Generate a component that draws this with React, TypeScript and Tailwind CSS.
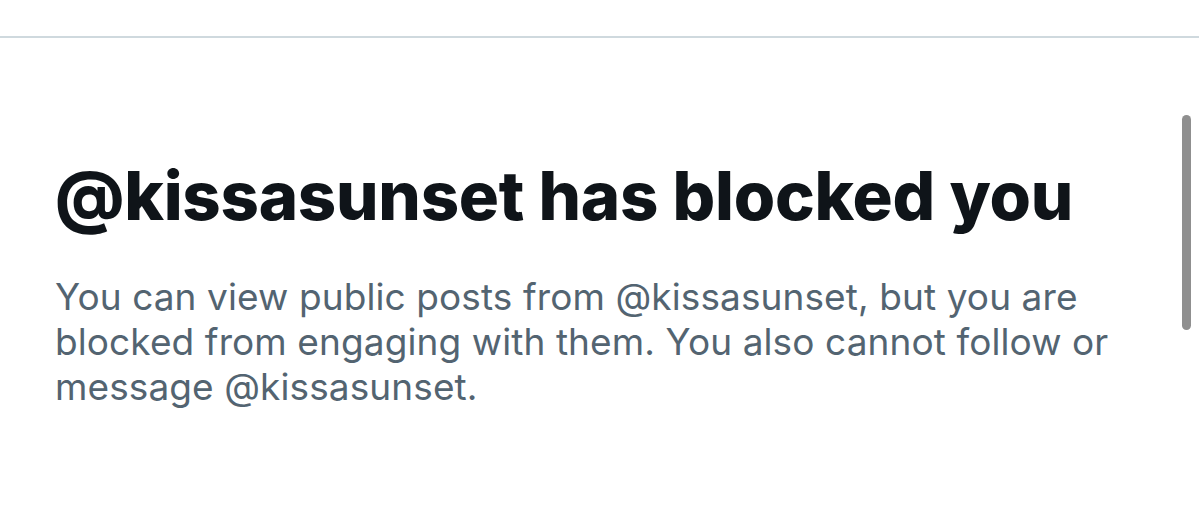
import React from 'react';

export default function App() {
  return (
    <div className="relative h-[508px] w-[1199px] overflow-hidden bg-white font-['Inter',sans-serif]">
      <div className="h-[38px] border-b-2 border-[#cfd9de]" />
      <div className="w-[1120px] pl-[55px] pt-[118px]">
        <h1 className="text-[67px] font-extrabold leading-[80px] tracking-[-0.25px] text-[#0f1419]">
          @kissasunset has blocked you
        </h1>
        <p className="mt-[38px] text-[37px] leading-[45px] tracking-[0.1px] text-[#536471]">
          You can view public posts from @kissasunset, but you are blocked from engaging with them. You also cannot follow or message @kissasunset.
        </p>
      </div>
      {/* scrollbar thumb */}
      <div className="absolute left-[1182px] top-[115px] h-[215px] w-[9px] rounded-full bg-[#8f8f8f]" />
    </div>
  );
}
